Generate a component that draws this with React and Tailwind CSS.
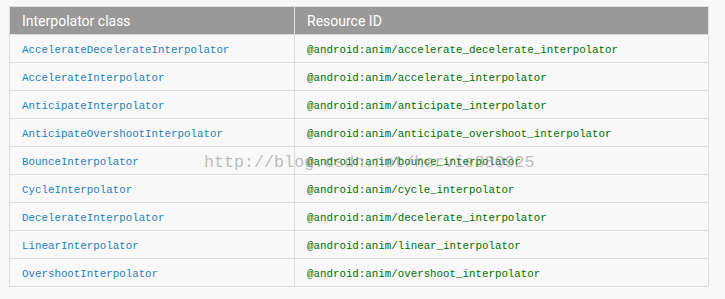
const rows = [
    ['AccelerateDecelerateInterpolator', '@android:anim/accelerate_decelerate_interpolator'],
    ['AccelerateInterpolator', '@android:anim/accelerate_interpolator'],
    ['AnticipateInterpolator', '@android:anim/anticipate_interpolator'],
    ['AnticipateOvershootInterpolator', '@android:anim/anticipate_overshoot_interpolator'],
    ['BounceInterpolator', '@android:anim/bounce_interpolator'],
    ['CycleInterpolator', '@android:anim/cycle_interpolator'],
    ['DecelerateInterpolator', '@android:anim/decelerate_interpolator'],
    ['LinearInterpolator', '@android:anim/linear_interpolator'],
    ['OvershootInterpolator', '@android:anim/overshoot_interpolator'],
]

export default function App() {
    return (
        <div className="relative w-[725px] h-[299px] bg-[#f8f8f8] pt-[6px] pl-[9px]">
            <table className="w-[700px] border-collapse border border-[#dddddd] table-fixed">
                <thead>
                    <tr className="h-[28px] bg-[#999999]">
                        <th className="w-[285px] text-left pl-[12px] pt-[2px] font-normal text-white text-[14px] border-r border-[#dddddd] font-['Roboto',sans-serif]">Interpolator class</th>
                        <th className="text-left pl-[12px] pt-[2px] font-normal text-white text-[14px] font-['Roboto',sans-serif]">Resource ID</th>
                    </tr>
                </thead>
                <tbody>
                    {rows.map(([cls, id]) => (
                        <tr key={cls} className="h-[28px] border-t border-[#dddddd]">
                            <td className="pl-[12px] pt-[4px] border-r border-[#dddddd] text-[10.8px] text-[#2580b3] font-['Liberation_Mono',monospace]">{cls}</td>
                            <td className="pl-[12px] pt-[4px] text-[10.8px] text-[#006e00] font-['Liberation_Mono',monospace]">{id}</td>
                        </tr>
                    ))}
                </tbody>
            </table>
            <div className="absolute left-[204px] top-[150px] text-[16.7px] text-[#888888]/55 font-['Liberation_Mono',monospace] pointer-events-none">
                http://blog.csdn.net/hervie880925
            </div>
        </div>
    )
}
